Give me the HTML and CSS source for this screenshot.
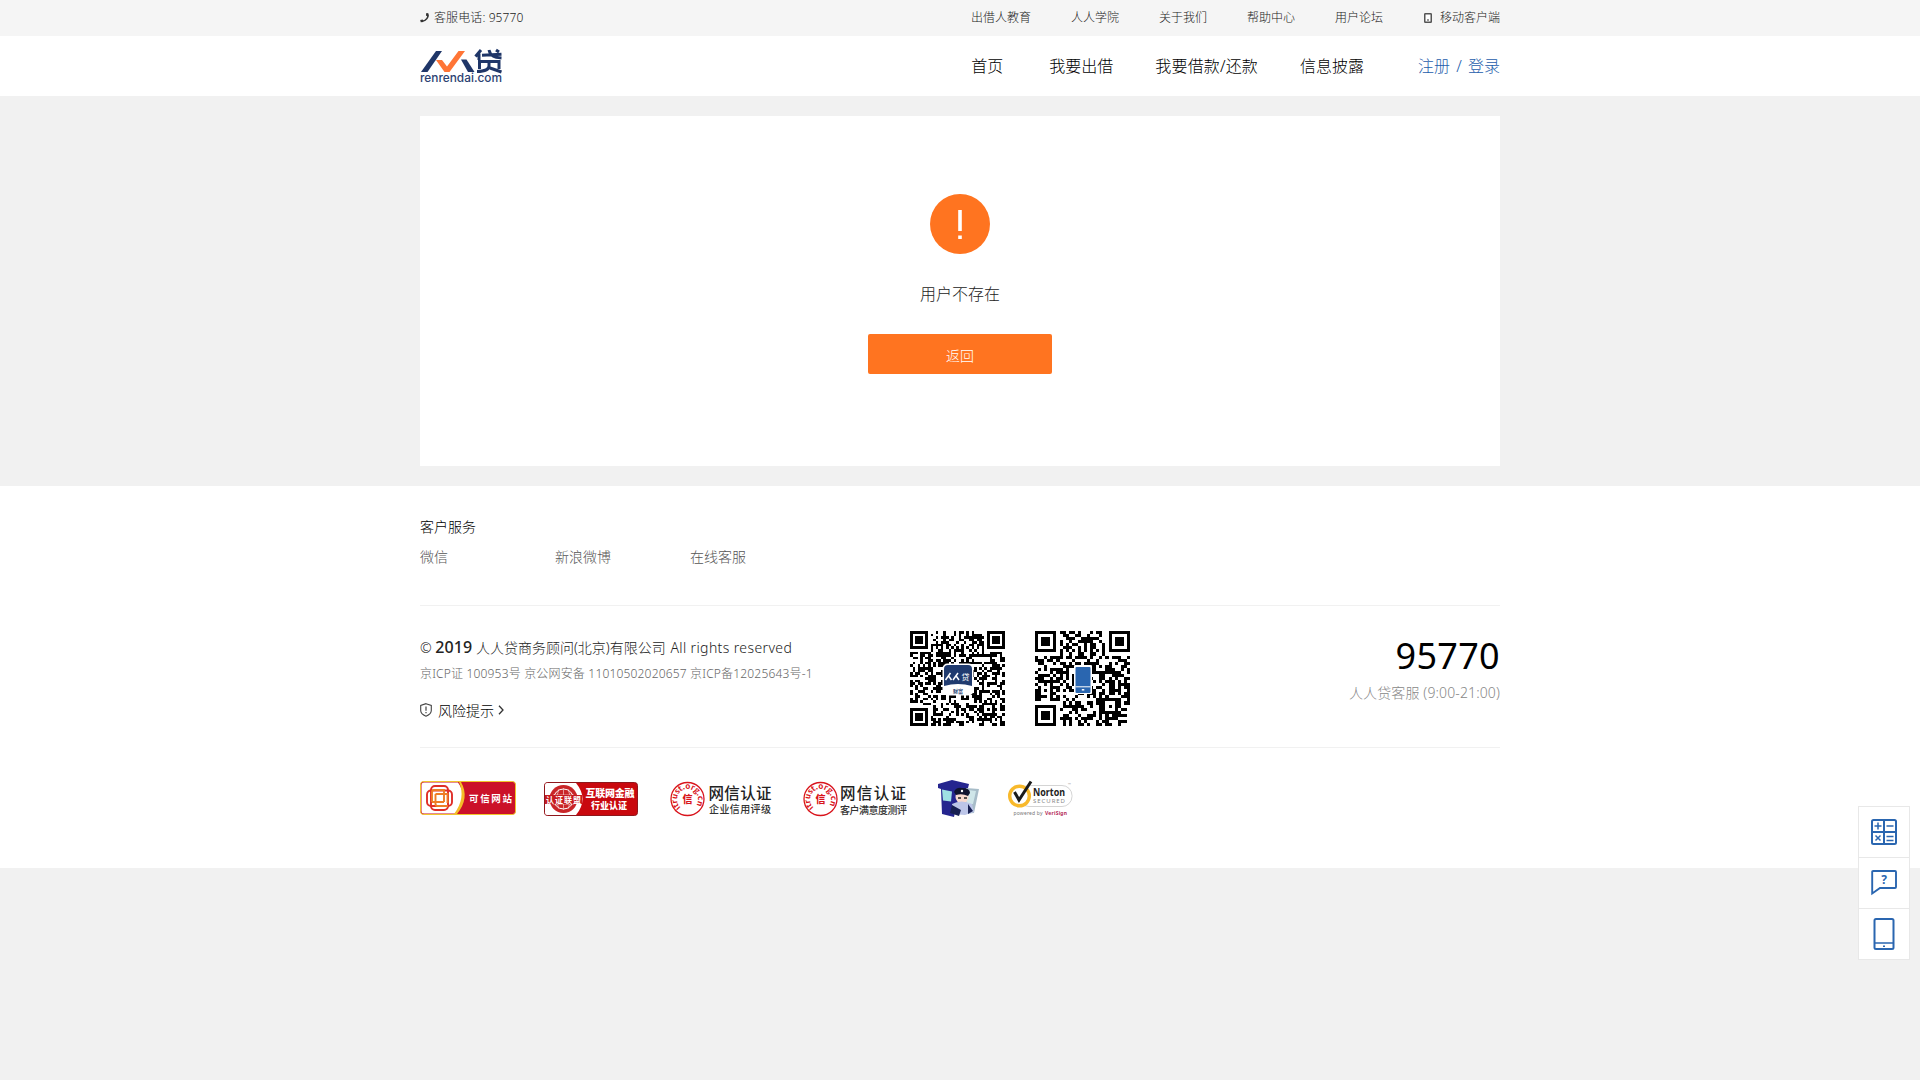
FILE: index.html
```html
<!DOCTYPE html>
<html lang="zh-CN">
<head>
<meta charset="utf-8">
<title>人人贷</title>
<link rel="stylesheet" href="styles.css">
</head>
<body>
<div class="topbar">
  <div class="wrap topbar-inner">
    <div class="phone">
      <svg width="9" height="10" viewBox="0 0 9 10"><path d="M7 0.8C9.6 3.2 6 8.8 1 8.2" fill="none" stroke="#333" stroke-width="1.6"/><path d="M6 .2h2.4v3L6.2 3zM.2 7l2.6-.4.6 2.4-2.6.2z" fill="#333"/></svg>
      <span>客服电话: 95770</span>
    </div>
    <nav class="topnav">
      <a>出借人教育</a><a>人人学院</a><a>关于我们</a><a>帮助中心</a><a>用户论坛</a>
      <a class="mobile"><svg width="8" height="10" viewBox="0 0 8 10"><rect x=".75" y=".75" width="6.5" height="8.5" rx=".6" fill="#fff" stroke="#555" stroke-width="1.5"/><path d="M3 7h2" stroke="#333"/></svg>移动客户端</a>
    </nav>
  </div>
</div>
<header class="header">
  <div class="wrap header-inner">
    <svg class="logo" width="84" height="37" viewBox="0 0 84 37">
      <path d="M1 23L16 2h6L7.500 23z" fill="#1f3668"/>
      <path d="M16 11h6l5 6.500L38.500 2h6.500L29.500 23h-5z" fill="#ff7536"/>
      <path d="M41 10.500h5.500L54.500 23H48z" fill="#1f3668"/>
      <g fill="none" stroke="#1f3668" stroke-width="3"><path d="M61 1L55.500 7.500M59 4.500V11M62 6.200l19.500-1M69 1c1.500 6 5 7.500 12.500 8M76 1l3 2M59.500 20v-7.500H79V20M69 14v3c0 3-4 5.500-12 5.500M70 19l11.500 4"/></g>
      <text class="logo-text" x="0" y="32.500" textLength="82" lengthAdjust="spacingAndGlyphs">renrendai.com</text>
    </svg>
    <nav class="mainnav">
      <a class="home">首页</a><a>我要出借</a><a class="loan">我要借款/还款</a><a>信息披露</a>
      <span class="account"><a>注册</a><i>/</i><a class="login">登录</a></span>
    </nav>
  </div>
</header>
<main class="wrap card">
  <svg class="warn" width="60" height="60" viewBox="0 0 60 60"><circle cx="30" cy="30" r="30" fill="#ff7420"/><path d="M28.200 16h3.600v21h-3.600zM28.200 41.500h3.600V45h-3.600z" fill="#fff"/></svg>
  <p class="message">用户不存在</p>
  <a class="back">返回</a>
</main>
<footer class="footer">
  <div class="wrap">
    <section class="service">
      <h3>客户服务</h3>
      <div class="service-links"><a>微信</a><a>新浪微博</a><a>在线客服</a></div>
    </section>
    <section class="company">
      <div class="legal">
        <p class="copyright">© <b>2019</b> 人人贷商务顾问(北京)有限公司 <span>All rights reserved</span></p>
        <p class="icp">京ICP证 100953号 京公网安备 11010502020657 京ICP备12025643号-1</p>
        <a class="risk"><svg width="12" height="14" viewBox="0 0 12 14"><path d="M6 .7L11.300 2.500v5C11.300 10 9 12 6 13.200 3 12 .7 10 .7 7.500v-5z" fill="none" stroke="#444" stroke-width="1.100"/><path d="M6 3.500v4.300M6 9v1.300" stroke="#444" stroke-width="1.200"/></svg><span>风险提示</span><svg width="6" height="10" viewBox="0 0 6 10"><path d="M1 .8L5 5 1 9.200" fill="none" stroke="#333" stroke-width="1.300"/></svg></a>
      </div>
      <div class="codes">
        <svg class="qr" data-size="37" data-seed="11" viewBox="0 0 95 95"><g class="modules"></g>
          <rect x="32.500" y="32.500" width="31" height="32" rx="5" fill="#fff"/><path d="M34 55V38q0-4 4-4h20q4 0 4 4v17q-14-4-28 0z" fill="#203b6f"/>
          <path d="M35.500 49l5-7M39 45.500l2.500 3.500M43 49l5-7M46.500 45.500l2.500 3.500" fill="none" stroke="#fff" stroke-width="1.500"/><text x="51.500" y="49" class="qr-brand">贷</text><text x="43" y="62" class="qr-sub">财富</text></svg>
        <svg class="qr" data-size="31" data-seed="29" viewBox="0 0 95 95"><g class="modules"></g>
          <rect x="39" y="34" width="18" height="29" rx="1" fill="#fff"/><rect x="40.500" y="36" width="15" height="26" rx="1" fill="#2a66b0"/><path d="M40.500 55.800h15" stroke="#fff"/><path d="M46.800 58.800h2.500" stroke="#fff" stroke-width="1.500"/></svg>
      </div>
      <div class="hotline"><strong>95770</strong><span>人人贷客服 (9:00-21:00)</span></div>
    </section>
    <section class="badges">
      <svg class="b-kexin" width="96" height="34" viewBox="0 0 96 34">
        <rect x=".5" y=".5" width="95" height="33" rx="3" fill="#cb1129" stroke="#f0c52c"/>
        <path d="M4 1.500h34Q49 17 36 32.500H4q-2.500 0-2.500-2.500V4Q1.500 1.500 4 1.500z" fill="#fff"/><path d="M39 1h2q9 16-4 32h-3q12-16 5-32z" fill="#f4bd28"/>
        <g fill="none" stroke-width="1.900"><rect x="11" y="5" width="17" height="24" rx="4" stroke="#df2e28"/><rect x="7" y="9.500" width="25" height="15.500" rx="4" stroke="#df2e28"/><path d="M12 21V11q0-2 2-2h10v12M15.500 13v10q0 2 2 2H28M15.500 13h12v9M12 21h12" stroke="#ee7d26"/></g>
        <text x="49" y="20.500" textLength="43" class="kexin-text">可信网站</text>
      </svg>
      <svg class="b-hulian" width="94" height="34" viewBox="0 0 94 34">
        <rect x=".5" y=".5" width="93" height="33" rx="3" fill="#c9080e" stroke="#8f171c"/><path d="M3 1h29q13 16 0 32H3q-2 0-2-2V3q0-2 2-2z" fill="#fff"/>
        <circle cx="19.500" cy="17" r="14" fill="#c92528"/><circle cx="19.500" cy="17" r="10" fill="none" stroke="#fff"/><path d="M9 13h21M9 22h21M19.500 6v22M15 7q-4 10 0 20M24 7q4 10 0 20" fill="none" stroke="#f3caca" stroke-width=".7"/>
        <rect x="1" y="13" width="37" height="9" fill="#c61b20"/><text x="2" y="20.500" textLength="35" class="ally-text">认证联盟</text>
        <text x="41.500" y="15" textLength="49" class="hulian-text">互联网金融</text><text x="47" y="27" textLength="36" class="hulian-sub">行业认证</text>
      </svg>
      <svg class="b-trust1" width="102" height="36" viewBox="0 0 102 36">
        <circle class="seal" cx="17.500" cy="18" r="16.500"/>
        <path id="arc" d="M10.800 26.500A10.500 10.500 0 1 1 24.200 26.500" fill="none"/><text class="arc-text"><textPath href="#arc" textLength="48">itrust.org.cn</textPath></text><text x="12.500" y="21.700" class="seal-text">信</text>
        <text x="38.500" y="17.500" textLength="63" class="trust-title">网信认证</text><text x="39" y="32" textLength="62" class="trust-sub">企业信用评级</text>
      </svg>
      <svg class="b-trust2" width="104" height="36" viewBox="0 0 104 36">
        <circle class="seal" cx="17.500" cy="18" r="16.500"/>
        <text class="arc-text"><textPath href="#arc" textLength="48">itrust.org.cn</textPath></text><text x="12.500" y="21.700" class="seal-text">信</text>
        <text x="37" y="17.500" textLength="66" class="trust-title">网信认证</text><text x="37" y="32.500" textLength="67" class="trust-sub">客户满意度测评</text>
      </svg>
      <svg class="b-police" width="42" height="37" viewBox="0 0 42 37">
        <path d="M0 4L14 0l17 4-1 4-3 4-10 20-1 5L4 34 3 9 0 8z" fill="#25258f"/><path d="M4 9.500l10 2-1 10-8-1z" fill="#9fe0e4"/><path d="M28 8l13 1-5 24-10 1z" fill="#a7bcc8"/><path d="M30 10l8 1-3 13h-7z" fill="#cfe6e9"/>
        <circle cx="24" cy="17" r="6.500" fill="#f7d9ce"/><path d="M16 12q2-5 8-4 8 0 8 5l-2 3q-6-3-12-1z" fill="#10142f"/><path d="M14 24q9-5 20 0l2 8-9 3-12-1z" fill="#bcc5e8"/><path d="M14 25l9 5-2 6-9-3zM30 24l5 7-5 3z" fill="#182052"/><path d="M20 18h3M26 18h3" stroke="#222" stroke-width="1.500"/><circle cx="24" cy="11" r="1.200" fill="#fff"/>
      </svg>
      <svg class="b-norton" width="66" height="37" viewBox="0 0 66 37">
        <rect x="11" y="5.500" width="53" height="21" rx="10" fill="#fff" stroke="#c9c9c9" stroke-width=".8"/><circle cx="11.500" cy="16" r="9.800" fill="#fff" stroke="#f8b92b" stroke-width="3.400"/>
        <path d="M6.500 12l4.500 8L23 1.500" fill="none" stroke="#1b1b1b" stroke-width="3"/>
        <text x="25" y="15.500" textLength="32" lengthAdjust="spacingAndGlyphs" class="norton">Norton</text><text x="25" y="23" textLength="32" class="secured">SECURED</text>
        <text x="5.500" y="35" textLength="29" class="powered">powered by</text><text x="37" y="35" textLength="22" class="verisign">VeriSign</text><text x="60" y="6" class="tm">™</text>
      </svg>
    </section>
  </div>
</footer>
<aside class="sidebar">
  <a><svg width="26" height="26" viewBox="0 0 26 26"><g fill="none" stroke="#2a66b0" stroke-width="2"><rect x="1" y="1" width="24" height="24" rx="1.500"/><path d="M13 1v24M1 13h24"/><path d="M3.500 7h7M7 3.500v7M15.500 7h7M4.500 16.500l5 5M9.500 16.500l-5 5M15.500 17.500h7M15.500 21.500h7" stroke-width="1.500"/></g></svg></a>
  <a><svg width="26" height="26" viewBox="0 0 26 26"><path d="M1.200 23.500V2q0-1 1-1H24q1 0 1 1v15q0 1-1 1H9z" fill="none" stroke="#2a66b0" stroke-width="1.900"/><text x="13" y="14" text-anchor="middle" class="question">?</text></svg></a>
  <a><svg width="22" height="32" viewBox="0 0 22 32"><rect x="1.500" y="1" width="19" height="30" rx="1.500" fill="none" stroke="#2a66b0" stroke-width="2"/><path d="M1.500 25h19M10 28.300h2" stroke="#2a66b0" stroke-width="1.500"/></svg></a>
</aside>
<script src="qr.js"></script>
</body>
</html>
```
FILE: styles.css
```css
* { box-sizing: border-box; }
body { margin: 0; background: #f1f1f1; color: #222; font-family: "Noto Sans", "Noto Sans CJK SC", sans-serif; font-size: 14px; font-weight: 300; }
p, h3 { margin: 0; }
svg { display: block; flex: none; }
.wrap { width: 1080px; margin: 0 auto; }
.topbar { height: 36px; background: #f5f5f5; font-size: 12px; line-height: 35px; }
.topbar-inner, .header-inner { display: flex; justify-content: space-between; }
.phone { display: flex; align-items: center; gap: 5px; height: 35px; letter-spacing: .1px; }
.topnav { display: flex; gap: 40px; }
.mobile { display: flex; align-items: center; gap: 8px; height: 35px; margin-left: 1px; }
.header { height: 60px; background: #fff; }
.logo { margin-top: 13px; overflow: visible; }
.logo-text { font: 500 12px Inter, sans-serif; fill: #2c4272; }
.mainnav { display: flex; gap: 42px; font-size: 16px; line-height: 61px; color: #000; }
.home { margin-right: 4px; }
.loan { letter-spacing: .15px; }
.account { display: flex; margin-left: 12px; color: #1d5cab; }
.account i { width: 18px; text-align: center; font-style: normal; }
.card { height: 350px; margin-top: 20px; padding-top: 78px; background: #fff; display: flex; flex-direction: column; align-items: center; }
.message { margin-top: 27px; font-size: 16px; line-height: 26px; }
.back { width: 184px; height: 40px; margin-top: 27px; border-radius: 2px; background: #ff7420; color: #fff; line-height: 43px; text-align: center; }
.footer { height: 382px; margin-top: 20px; padding-top: 26px; background: #fff; }
.service { height: 94px; border-bottom: 1px solid #f1f1f1; }
.service h3 { font-size: 14px; font-weight: 300; line-height: 30px; color: #000; }
.service-links { display: flex; line-height: 30px; color: #555; }
.service-links a { width: 135px; }
.company { display: flex; height: 142px; padding-top: 25px; border-bottom: 1px solid #f1f1f1; }
.legal { width: 490px; padding-top: 3px; white-space: nowrap; }
.copyright { line-height: 26px; }
.copyright b { font-size: 16px; font-weight: 500; letter-spacing: .1px; }
.copyright span { margin-left: 1px; letter-spacing: .38px; }
.icp { margin-top: 1px; font-size: 12px; line-height: 24px; letter-spacing: .18px; color: #666; }
.risk { display: flex; align-items: center; height: 24px; margin-top: 12px; color: #000; }
.risk span { margin: 0 4px 0 6px; }
.codes { display: flex; gap: 30px; }
.qr { width: 95px; height: 95px; }
.qr-brand { font: 8px "Noto Sans CJK SC", sans-serif; fill: #fff; }
.qr-sub { font: 700 5px "Noto Sans CJK SC", sans-serif; fill: #203b6f; }
.hotline { display: flex; flex-direction: column; flex: 1; text-align: right; }
.hotline strong { font-size: 36px; font-weight: 400; line-height: 50px; letter-spacing: .3px; color: #000; }
.hotline span { line-height: 24px; letter-spacing: .13px; color: #888; }
.badges { display: flex; padding-top: 33px; }
.b-hulian { margin: 1px 0 0 28px; }
.b-trust1 { margin-left: 32px; }
.b-trust2 { margin-left: 31px; }
.b-police { margin: -1px 0 0 31px; }
.b-norton { margin: -1px 0 0 28px; }
.badges text { font-family: "Noto Sans CJK SC", sans-serif; }
.kexin-text { font-size: 9.5px; font-weight: 700; fill: #fff; }
.ally-text { font-size: 8px; font-weight: 700; fill: #fff; }
.hulian-text { font-size: 10px; font-weight: 900; fill: #fff; }
.hulian-sub { font-size: 9px; font-weight: 900; fill: #fff; }
.seal { fill: none; stroke: #d9141c; stroke-width: 1.3; }
.seal-text { font-size: 10px; font-weight: 900; fill: #d9141c; }
.arc-text { font-size: 8px; font-weight: 700; fill: #d9141c; }
.trust-title { font-size: 15.5px; font-weight: 500; fill: #222; }
.trust-sub { font-size: 10px; font-weight: 500; fill: #333; }
.badges .norton { font: 700 10px "Noto Sans", sans-serif; fill: #222; }
.badges .secured { font: 6px "Noto Sans", sans-serif; fill: #888; }
.badges .powered { font: 5px "Noto Sans", sans-serif; fill: #777; }
.badges .verisign { font: 700 5px "Noto Sans", sans-serif; fill: #b52a58; }
.badges .tm { font-size: 4px; fill: #999; }
.sidebar { position: fixed; right: 10px; top: 806px; width: 52px; border: 1px solid #e8e8e8; background: #fff; }
.sidebar a { height: 50px; display: flex; align-items: center; justify-content: center; }
.sidebar a + a { height: 51px; border-top: 1px solid #e8e8e8; }
.question { font: 700 12px "Noto Sans", sans-serif; fill: #2a66b0; }
```
FILE: qr.js
```js
// Fills each .qr with a module grid: three finder patterns, timing lines and a seeded data area.
document.querySelectorAll('.qr').forEach(function (svg) {
  var n = +svg.dataset.size, s = +svg.dataset.seed, unit = 95 / n, d = '';
  function next() { s = (s * 48271) % 2147483647; return s / 2147483647; }
  function finder(x, y) {
    if (x < 0 || y < 0 || x > 6 || y > 6) return false;
    var r = Math.max(Math.abs(x - 3), Math.abs(y - 3));
    return r === 3 || r < 2;
  }
  for (var i = 0; i < 10; i++) next();
  for (var y = 0; y < n; y++) {
    for (var x = 0; x < n; x++) {
      var on = next() < 0.5;
      if (x < 8 && y < 8) on = finder(x, y);
      else if (x >= n - 8 && y < 8) on = finder(x - n + 7, y);
      else if (x < 8 && y >= n - 8) on = finder(x, y - n + 7);
      else if (x === 6 || y === 6) on = (x + y) % 2 === 0;
      else if (Math.abs(x - n + 7) < 3 && Math.abs(y - n + 7) < 3)
        on = Math.max(Math.abs(x - n + 7), Math.abs(y - n + 7)) !== 1;
      if (on) d += 'M' + x * unit + ' ' + y * unit + 'h' + unit + 'v' + unit + 'h-' + unit + 'z';
    }
  }
  svg.querySelector('.modules').innerHTML = '<path d="' + d + '" shape-rendering="crispEdges"/>';
});
```
